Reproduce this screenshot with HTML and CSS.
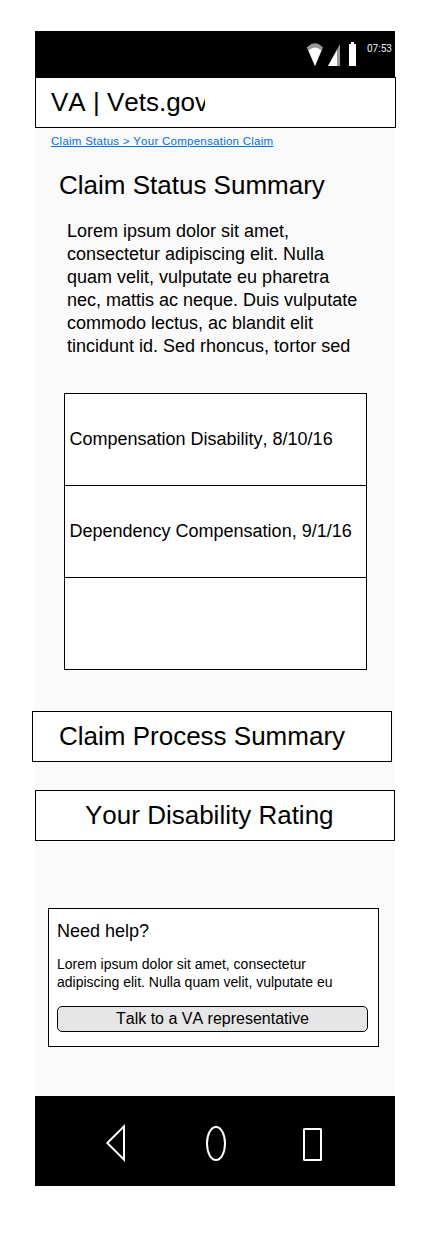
FILE: index.html
```html
<!DOCTYPE html>
<html lang="en">
<head>
<meta charset="utf-8">
<title>VA | Vets.gov</title>
<link rel="stylesheet" href="styles.css">
</head>
<body>
<div class="phone">
  <div class="status-bar">
    <svg class="status-icons" width="54" height="28" viewBox="0 0 54 28">
      <path d="M.8 5.500Q9 -3 17 5.500L9 24Z" fill="#999"/>
      <path d="M2.500 8.500Q9 2.500 15.300 8.500L9 24Z" fill="#fff"/>
      <path d="M34 2V24H22Z" fill="#999"/>
      <path d="M31 8V24H22Z" fill="#fff"/>
      <path d="M45 0h3v2h2v22h-7V2h2Z" fill="#fff"/>
    </svg>
    <span class="clock">07:53</span>
  </div>
  <header class="site-header"><div class="brand">VA | Vets.gov</div></header>
  <a class="breadcrumb">Claim Status &gt; Your Compensation Claim</a>
  <h1 class="title">Claim Status Summary</h1>
  <p class="intro">Lorem ipsum dolor sit amet,<br>consectetur adipiscing elit. Nulla<br>quam velit, vulputate eu pharetra<br>nec, mattis ac neque. Duis vulputate<br>commodo lectus, ac blandit elit<br>tincidunt id. Sed rhoncus, tortor sed</p>
  <ul class="claims">
    <li class="claim">Compensation Disability, 8/10/16</li>
    <li class="claim">Dependency Compensation, 9/1/16</li>
    <li class="claim"></li>
  </ul>
  <section class="panel panel-process">Claim Process Summary</section>
  <section class="panel panel-rating">Your Disability Rating</section>
  <section class="help">
    <h2 class="help-title">Need help?</h2>
    <p class="help-text">Lorem ipsum dolor sit amet, consectetur<br>adipiscing elit. Nulla quam velit, vulputate eu</p>
    <button class="help-button">Talk to a VA representative</button>
  </section>
  <nav class="nav-bar">
    <svg width="220" height="40" viewBox="0 0 220 40" fill="none" stroke="#fff" stroke-width="2">
      <path d="M19 3.300V36.700L2.300 20Z"/>
      <ellipse cx="111" cy="20.500" rx="9" ry="16.500"/>
      <rect x="199" y="6" width="17" height="31" rx=".5"/>
    </svg>
  </nav>
</div>
</body>
</html>
```
FILE: styles.css
```css
* { box-sizing: border-box; }
body {
  margin: 0;
  background: #fff;
  color: #000;
  font-family: "Liberation Sans", Arial, sans-serif;
  font-kerning: none;
}
h1, h2, p, ul { margin: 0; padding: 0; font-weight: normal; }
.phone {
  display: flex;
  flex-direction: column;
  align-items: flex-start;
  width: 360px;
  height: 1155px;
  margin: 31px 0 0 35px;
  background: #fafafa;
  white-space: nowrap;
}
.status-bar {
  display: flex;
  width: 360px;
  height: 46px;
  padding: 11px 0 0 271px;
  background: #000;
}
.status-icons { flex: none; }
.clock {
  margin-left: 7px;
  color: #f0f0f0;
  font: 10px/14px Roboto, sans-serif;
}
.site-header {
  width: 361px;
  height: 51px;
  padding: 9px 15px;
  border: 1px solid #000;
  background: #fff;
}
.brand {
  width: 154px;
  overflow: hidden;
  font-size: 26px;
  line-height: 30px;
}
.breadcrumb {
  margin: 6px 0 0 16px;
  color: #0070e8;
  font-size: 11.500px;
  letter-spacing: .26px;
  line-height: 14px;
  text-decoration: underline;
}
.title {
  margin: 22px 0 0 24px;
  font-size: 26px;
  line-height: 30px;
}
.intro {
  margin: 20px 0 0 32px;
  font-size: 18px;
  line-height: 23px;
}
.claims {
  width: 303px;
  margin: 35px 0 0 29px;
  border: 1px solid #000;
  background: #fff;
  list-style: none;
}
.claim {
  height: 92px;
  padding-left: 4.500px;
  border-bottom: 1px solid #000;
  font-size: 18px;
  line-height: 90px;
}
.claim:last-child { height: 91px; border-bottom: 0; }
.panel {
  width: 360px;
  height: 51px;
  border: 1px solid #000;
  background: #fff;
  font-size: 26px;
  line-height: 49px;
}
.panel-process { margin: 41px 0 0 -3px; padding-left: 26px; }
.panel-rating { margin-top: 28px; padding-left: 49px; }
.help {
  display: flex;
  flex-direction: column;
  width: 331px;
  height: 139px;
  margin: 67px 0 0 13px;
  padding: 12px 10px 0 8px;
  border: 1px solid #000;
  background: #fff;
}
.help-title { font-size: 18px; line-height: 21px; }
.help-text { margin-top: 13px; font-size: 14px; line-height: 18px; }
.help-button {
  width: 311px;
  height: 26px;
  margin-top: 15px;
  padding: 0;
  border: 1px solid #000;
  border-radius: 5px;
  background: #e6e6e6;
  color: #000;
  font: 16px/24px "Liberation Sans", Arial, sans-serif;
  font-kerning: none;
}
.nav-bar {
  width: 360px;
  height: 90px;
  margin-top: auto;
  padding: 27px 0 0 70px;
  background: #000;
}
```
